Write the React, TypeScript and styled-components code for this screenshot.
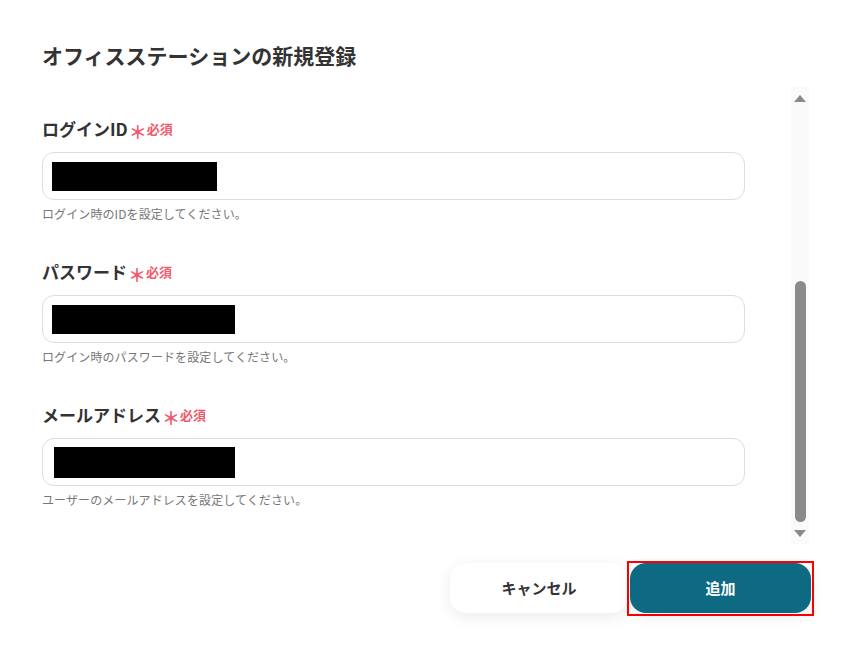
import React from "react";
import styled, { createGlobalStyle } from "styled-components";

const GlobalStyle = createGlobalStyle`
  body {
    margin: 0;
    background: #ffffff;
    font-family: "Noto Sans CJK JP", "Noto Sans", sans-serif;
    color: #333333;
  }
`;

const Page = styled.div`
  width: 846px;
  height: 651px;
  display: flex;
  flex-direction: column;
  background: #ffffff;
`;

const Header = styled.div`
  height: 87px;
  box-sizing: border-box;
  padding: 40px 0 0 42px;
`;

const Title = styled.h1`
  margin: 0;
  font-size: 21px;
  line-height: 31px;
  font-weight: 700;
  color: #333333;
`;

const ScrollArea = styled.div`
  height: 457px;
  display: flex;
  padding-right: 37px;
`;

const Form = styled.div`
  flex: 1;
  padding: 29px 46px 0 42px;
  display: flex;
  flex-direction: column;
  gap: 36px;
`;

const Field = styled.div`
  display: flex;
  flex-direction: column;
`;

const Label = styled.label`
  display: flex;
  align-items: center;
  height: 25px;
  font-size: 17px;
  font-weight: 700;
  color: #333333;
`;

const Required = styled.span`
  display: inline-flex;
  align-items: center;
  margin-left: 1px;
  color: #f05a6c;
  font-size: 13px;
  font-weight: 700;
`;

const Asterisk = styled.span`
  font-size: 18px;
  line-height: 1;
  margin-right: 0;
  position: relative;
  top: 2px;
`;

const InputBox = styled.div<{ $inset: number }>`
  margin-top: 11px;
  height: 48px;
  box-sizing: border-box;
  border: 1px solid #dcdde2;
  border-radius: 12px;
  display: flex;
  align-items: center;
  padding-left: ${(p) => p.$inset}px;
`;

const Redacted = styled.span<{ $w: number; $h: number }>`
  display: block;
  width: ${(p) => p.$w}px;
  height: ${(p) => p.$h}px;
  background: #000000;
`;

const Help = styled.p`
  margin: 5px 0 0;
  font-size: 12px;
  line-height: 18px;
  letter-spacing: 0.1px;
  color: #777777;
`;

const Scrollbar = styled.div`
  width: 18px;
  background: #fafafa;
  display: flex;
  flex-direction: column;
  align-items: center;
`;

const Arrow = styled.span<{ $down?: boolean }>`
  width: 0;
  height: 0;
  border-left: 6.5px solid transparent;
  border-right: 6.5px solid transparent;
  ${(p) =>
    p.$down
      ? "border-top: 7px solid #8a8a8a; margin: 8px 0 7px;"
      : "border-bottom: 7px solid #8a8a8a; margin: 8px 0 0;"}
`;

const Track = styled.div`
  flex: 1;
  width: 100%;
  display: flex;
  flex-direction: column;
  justify-content: flex-end;
  align-items: center;
`;

const Thumb = styled.div`
  width: 11px;
  height: 241px;
  border-radius: 6px;
  background: #8a8a8a;
`;

const Footer = styled.div`
  display: flex;
  justify-content: flex-end;
  align-items: flex-start;
  padding: 17px 32px 0 0;
`;

const Button = styled.button<{ $primary?: boolean }>`
  height: 50px;
  border: none;
  border-radius: 16px;
  font-family: inherit;
  font-size: 15px;
  font-weight: 700;
  line-height: 1;
  padding: 0 0 2px;
  cursor: pointer;
  background: ${(p) => (p.$primary ? "#0d6a82" : "#ffffff")};
  color: ${(p) => (p.$primary ? "#ffffff" : "#333333")};
  box-shadow: 0 4px 16px rgba(0, 0, 0, 0.08);
`;

const CancelButton = styled(Button)`
  width: 178px;
  margin-top: 2px;
  margin-right: -1px;
`;

const AddFrame = styled.div`
  border: 2px solid #ff0000;
  padding: 0 1px 1px 1px;
  display: flex;
`;

const AddButton = styled(Button)`
  width: 181px;
`;

const fields = [
  {
    label: "ログインID",
    help: "ログイン時のIDを設定してください。",
    inset: 9,
    w: 165,
    h: 29,
  },
  {
    label: "パスワード",
    help: "ログイン時のパスワードを設定してください。",
    inset: 9,
    w: 183,
    h: 29,
  },
  {
    label: "メールアドレス",
    help: "ユーザーのメールアドレスを設定してください。",
    inset: 11,
    w: 181,
    h: 31,
  },
];

export default function App() {
  return (
    <>
      <GlobalStyle />
      <Page>
        <Header>
          <Title>オフィスステーションの新規登録</Title>
        </Header>
        <ScrollArea>
          <Form>
            {fields.map((f) => (
              <Field key={f.label}>
                <Label>
                  {f.label}
                  <Required>
                    <Asterisk>＊</Asterisk>必須
                  </Required>
                </Label>
                <InputBox $inset={f.inset}>
                  <Redacted $w={f.w} $h={f.h} />
                </InputBox>
                <Help>{f.help}</Help>
              </Field>
            ))}
          </Form>
          <Scrollbar>
            <Arrow />
            <Track>
              <Thumb />
            </Track>
            <Arrow $down />
          </Scrollbar>
        </ScrollArea>
        <Footer>
          <CancelButton>キャンセル</CancelButton>
          <AddFrame>
            <AddButton $primary>追加</AddButton>
          </AddFrame>
        </Footer>
      </Page>
    </>
  );
}
